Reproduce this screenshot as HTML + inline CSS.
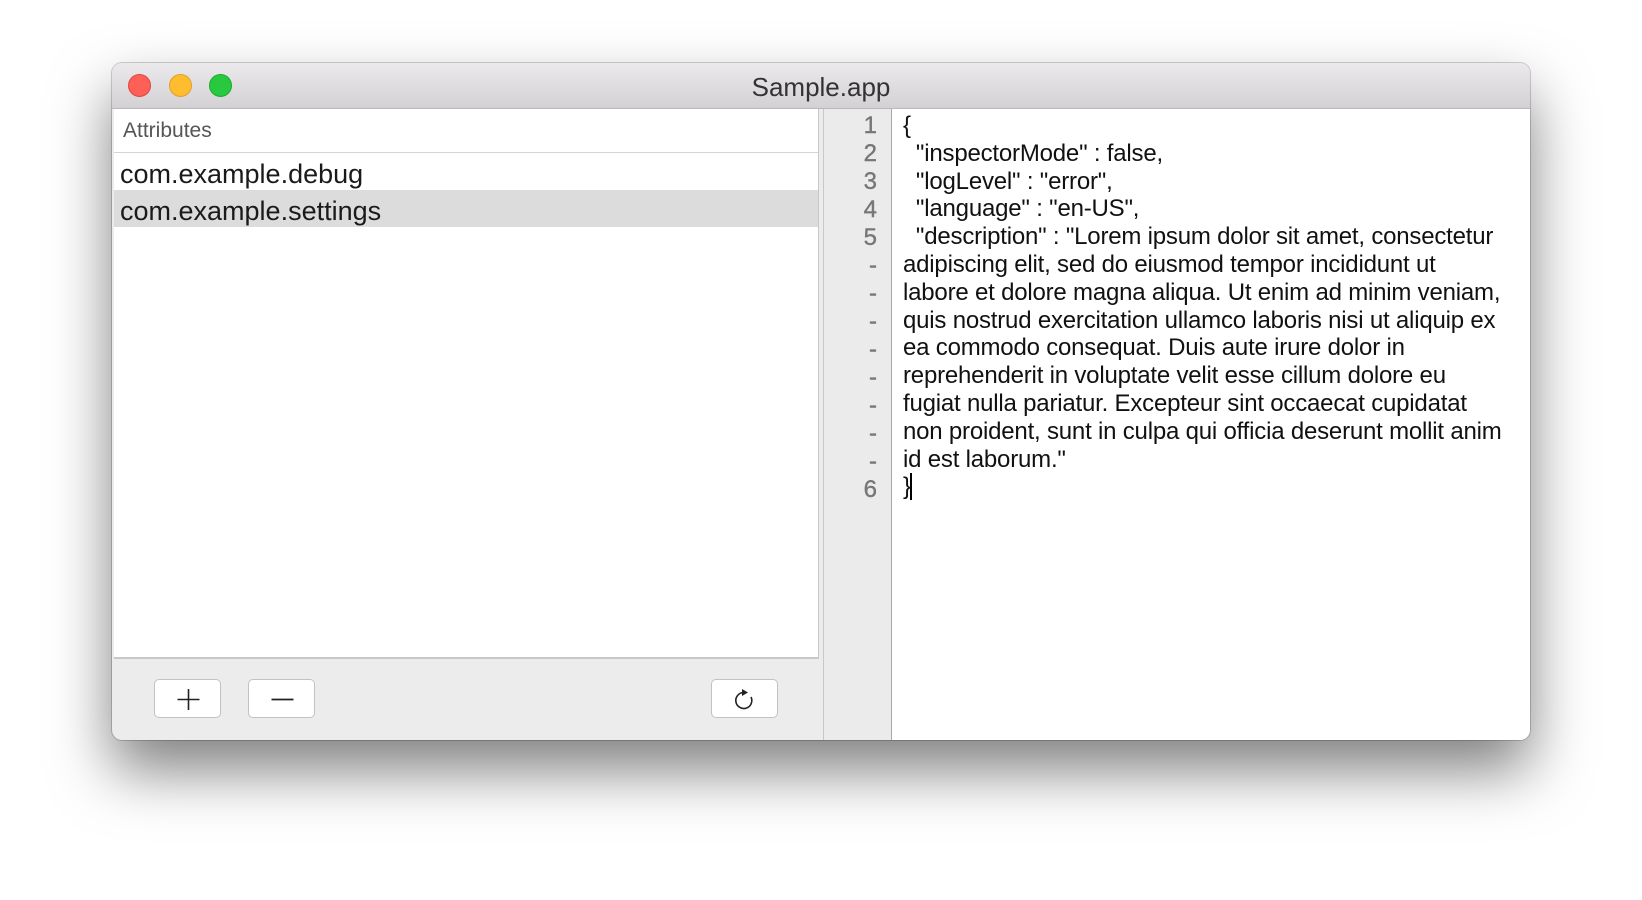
<!DOCTYPE html>
<html><head><style>
body{margin:0;width:1642px;height:900px;background:#fff;position:relative;overflow:hidden;font-family:"Liberation Sans",Arial,sans-serif}
.win{position:absolute;left:112px;top:63px;width:1418px;height:677px;border-radius:10px;background:#ececec;box-shadow:0 30px 60px rgba(0,0,0,.5),0 0 0 1px rgba(0,0,0,.18);overflow:hidden}
.tb{position:absolute;left:0;top:0;right:0;height:45px;background:linear-gradient(#ebe9eb,#d3d1d3);border-bottom:1px solid #b9b9b9}
.tl{position:absolute;top:11px;width:23px;height:23px;border-radius:50%;box-sizing:border-box}
.title{position:absolute;left:0;right:0;top:9px;text-align:center;font-size:26px;color:#333}
.left{position:absolute;left:2px;top:46px;width:704px;height:548px;background:#fff;border-right:1px solid #c8c8c8;border-bottom:2px solid #c8c8c8}
.hdr{height:43px;border-bottom:1px solid #d4d4d4;font-size:21px;color:#555;line-height:44px;padding-left:9px}
.row{height:37px;line-height:42px;font-size:27px;color:#1a1a1a;padding-left:6px}
.sel{background:#dcdcdc}
.btn{position:absolute;top:616px;width:67px;height:39px;background:#fff;border:1px solid #c2c2c2;border-radius:5px;box-sizing:border-box}
.gut{position:absolute;left:711px;top:46px;width:67px;height:640px;background:#ebebeb;border-left:1px solid #c8c8c8;border-right:2px solid #a9a9a9}
.ed{position:absolute;left:780px;top:46px;right:0;bottom:0;background:#fff}
.ln{position:absolute;left:0;width:53px;text-align:right;font-size:24px;color:#777;-webkit-text-stroke:0.4px #777}
.code{position:absolute;left:11px;font-size:24px;color:#111;white-space:pre;letter-spacing:-0.2px}
</style></head><body>
<div class="win">
 <div class="tb">
  <div class="tl" style="left:16px;background:#fe5f57;border:1px solid #e0443e"></div>
  <div class="tl" style="left:57px;background:#febc2e;border:1px solid #dea123"></div>
  <div class="tl" style="left:97px;background:#28c840;border:1px solid #1aab29"></div>
  <div class="title">Sample.app</div>
 </div>
 <div class="left">
  <div class="hdr">Attributes</div>
  <div class="row">com.example.debug</div>
  <div class="row sel">com.example.settings</div>
 </div>
 <div class="btn" style="left:42px"><svg width="67" height="39"><path d="M33.5 9V30M22.5 19.5H44.5" stroke="#222" stroke-width="1.6"/></svg></div>
 <div class="btn" style="left:136px"><svg width="67" height="39"><path d="M22.5 19.5H44.5" stroke="#222" stroke-width="1.8"/></svg></div>
 <div class="btn" style="left:599px"><svg width="67" height="39"><path d="M31.5 12.5 A8 8 0 1 0 39 17" fill="none" stroke="#222" stroke-width="1.6"/><path d="M30 9 L36 12.5 L30 16 Z" fill="#222"/></svg></div>
 <div class="gut">
  <div class="ln" style="top:3px;line-height:28px">1<br>2<br>3<br>4<br>5<br>-<br>-<br>-<br>-<br>-<br>-<br>-<br>-<br>6</div>
 </div>
 <div class="ed">
  <div class="code" style="top:3px;line-height:27.8px">{
  "inspectorMode" : false,
  "logLevel" : "error",
  "language" : "en-US",
  "description" : "Lorem ipsum dolor sit amet, consectetur
adipiscing elit, sed do eiusmod tempor incididunt ut
labore et dolore magna aliqua. Ut enim ad minim veniam,
quis nostrud exercitation ullamco laboris nisi ut aliquip ex
ea commodo consequat. Duis aute irure dolor in
reprehenderit in voluptate velit esse cillum dolore eu
fugiat nulla pariatur. Excepteur sint occaecat cupidatat
non proident, sunt in culpa qui officia deserunt mollit anim
id est laborum."
}<span style="border-left:2px solid #000;margin-left:-1px"></span></div>
 </div>
</div>
</body></html>
